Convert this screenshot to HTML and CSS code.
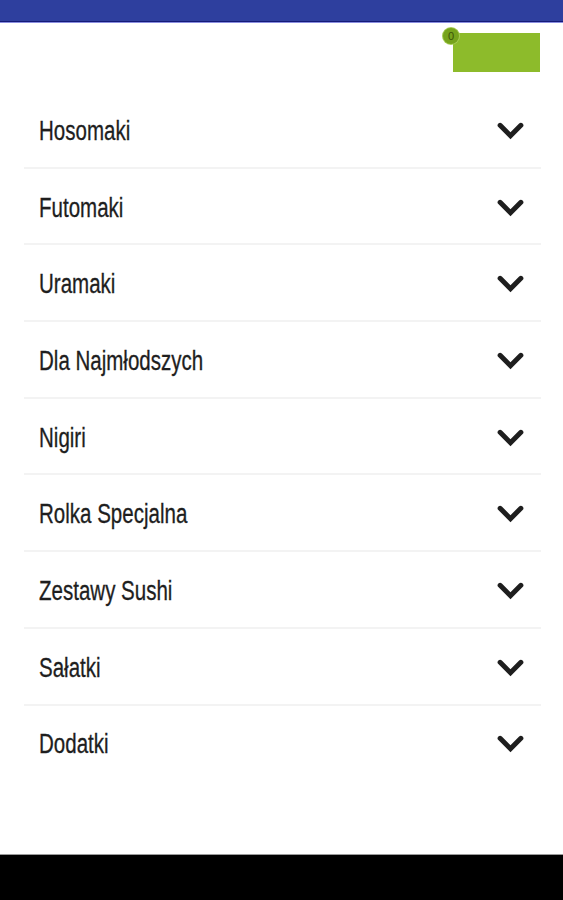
FILE: index.html
```html
<!DOCTYPE html>
<html>
  <head>
    <meta charset="utf-8">
    <title>Menu</title>
    <link rel="stylesheet" href="styles.css">
  </head>
  <body>
    <div class="page">
      <div class="topbar"></div>
      <div class="header">
        <a href="#" class="cart">
          <span class="badge">0</span>
        </a>
      </div>
      <ul class="menu">
        <li class="row"><span class="name">Hosomaki</span><svg class="chev" viewBox="0 0 26 18"><path d="M3 3 L13 13 L23 3" /></svg></li>
        <li class="row"><span class="name">Futomaki</span><svg class="chev" viewBox="0 0 26 18"><path d="M3 3 L13 13 L23 3" /></svg></li>
        <li class="row"><span class="name">Uramaki</span><svg class="chev" viewBox="0 0 26 18"><path d="M3 3 L13 13 L23 3" /></svg></li>
        <li class="row"><span class="name">Dla Najmłodszych</span><svg class="chev" viewBox="0 0 26 18"><path d="M3 3 L13 13 L23 3" /></svg></li>
        <li class="row"><span class="name">Nigiri</span><svg class="chev" viewBox="0 0 26 18"><path d="M3 3 L13 13 L23 3" /></svg></li>
        <li class="row"><span class="name">Rolka Specjalna</span><svg class="chev" viewBox="0 0 26 18"><path d="M3 3 L13 13 L23 3" /></svg></li>
        <li class="row"><span class="name">Zestawy Sushi</span><svg class="chev" viewBox="0 0 26 18"><path d="M3 3 L13 13 L23 3" /></svg></li>
        <li class="row"><span class="name">Sałatki</span><svg class="chev" viewBox="0 0 26 18"><path d="M3 3 L13 13 L23 3" /></svg></li>
        <li class="row"><span class="name">Dodatki</span><svg class="chev" viewBox="0 0 26 18"><path d="M3 3 L13 13 L23 3" /></svg></li>
      </ul>
      <div class="navbar"></div>
    </div>
  </body>
</html>
```

FILE: styles.css
```css
body {
  margin: 0;
  background: #fff;
  font-family: "Liberation Sans", Arial, sans-serif;
}
.page {
  display: flex;
  flex-direction: column;
  height: 900px;
}
/* status bar */
.topbar {
  height: 21px;
  background-color: #2e3f9e;
  border-bottom: 1px solid #141a78;
  box-shadow: 0 1px 0 #8a8ee0;
}
.header {
  height: 70px;
  display: flex;
  justify-content: flex-end;
  align-items: flex-start;
  padding-right: 23px;
}
.cart {
  position: relative;
  display: block;
  width: 87px;
  height: 39px;
  margin-top: 11px;
  background-color: #8dbb2b;
}
.badge {
  position: absolute;
  left: -10px;
  top: -5px;
  width: 16px;
  height: 16px;
  border-radius: 50%;
  background-color: #76a31c;
  box-shadow: 0 0 0 1px #a6cc55;
  color: #3a5208;
  font-size: 11px;
  line-height: 16px;
  text-align: center;
}
.menu {
  list-style: none;
  margin: 0 22px 0 24px;
  padding: 0;
  flex: 1;
}
.row {
  display: flex;
  align-items: center;
  justify-content: space-between;
  box-sizing: content-box;
  height: 70.7px;
  padding: 4px 17px 0 15px;
  border-bottom: 2px solid #f3f3f3;
}
.row:last-child {
  border-bottom: none;
}
/* 좁은 글꼴이 없어서 가로로 줄임 */
.name {
  display: inline-block;
  font-size: 27px;
  color: #1e1e1e;
  transform: scaleX(0.76);
  transform-origin: left center;
  -webkit-text-stroke: 0.3px #1e1e1e;
}
.chev {
  width: 27px;
  height: 19px;
}
.chev path {
  fill: none;
  stroke: #1e1e1e;
  stroke-width: 4.8;
  stroke-linecap: round;
  stroke-linejoin: miter;
}
.navbar {
  height: 45px;
  background-color: #000;
  border-top: 1px solid #9a9a9a;
}
```
